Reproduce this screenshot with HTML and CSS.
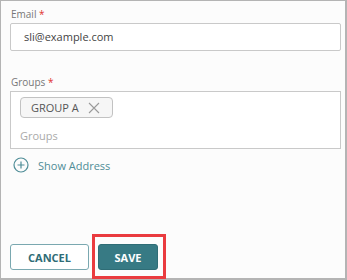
FILE: index.html
```html
<!doctype html>
<html lang="en-us">
  <head>
    <meta charset="utf-8" />
    <title>Edit User</title>
    <link rel="stylesheet" href="styles.css">
  </head>
  <body>
    <div class="panel">
      <div class="field">
        <label class="label">Email <span class="req">*</span></label>
        <div class="input">sli@example.com</div>
      </div>

      <div class="field">
        <label class="label">Groups <span class="req">*</span></label>
        <div class="tags">
          <span class="chip">
            GROUP A
            <svg class="chip-x" width="12" height="12" viewBox="0 0 12 12">
              <path d="M1 1 L11 11 M11 1 L1 11" stroke="#9a9a9a" stroke-width="1.1" fill="none" />
            </svg>
          </span>
          <div class="placeholder">Groups</div>
        </div>
      </div>

      <a class="add-link">
        <svg width="16" height="16" viewBox="0 0 16 16">
          <circle cx="8" cy="8" r="7" stroke="#4f8d97" stroke-width="1.2" fill="none" />
          <path d="M8 4.5 V11.5 M4.5 8 H11.5" stroke="#4f8d97" stroke-width="1.2" />
        </svg>
        Show Address
      </a>

      <div class="actions">
        <button class="btn btn-outline">Cancel</button>
        <span class="highlight-wrap">
          <button class="btn btn-primary">Save</button>
          <span class="highlight"></span>
        </span>
      </div>
    </div>
  </body>
</html>
```

FILE: styles.css
```css
* {
  box-sizing: border-box;
}

body {
  margin: 0;
  background: #fff;
  font-family: 'Open Sans', 'Noto Sans', sans-serif;
}

.panel {
  width: 347px;
  height: 280px;
  background: #fcfcfc;
  border-top: 1px solid #b4b4b4;
  border-left: 1px solid #b4b4b4;
  border-right: 2px solid #b4b4b4;
  border-bottom: 2px solid #b4b4b4;
  padding: 6px 4px 0 9px;
  display: flex;
  flex-direction: column;
}

.field {
  display: flex;
  flex-direction: column;
}

.label {
  font-size: 10px;
  line-height: 14px;
  color: #777;
  margin: 0 0 2px 1px;
}

.req {
  color: #e0312f;
}

.input {
  height: 28px;
  background: #fff;
  border: 1px solid #c9c9c9;
  border-radius: 2px;
  padding: 0 13px;
  font-size: 11px;
  line-height: 26px;
  color: #444;
  margin-bottom: 24px;
}

.tags {
  height: 58px;
  background: #fff;
  border: 1px solid #c9c9c9;
  padding: 5px 9px 0;
  display: flex;
  flex-direction: column;
  align-items: flex-start;
}

.chip {
  display: flex;
  align-items: center;
  gap: 9px;
  height: 21px;
  padding: 0 12px 0 10px;
  border: 1px solid #c2c2c2;
  border-radius: 4px;
  background: #f6f6f6;
  font-size: 11px;
  color: #555;
}

.chip-x {
  display: block;
}

.placeholder {
  margin-top: 10px;
  font-size: 11px;
  line-height: 16px;
  color: #aaa;
}

.add-link {
  display: flex;
  align-items: center;
  gap: 9px;
  margin: 8px 0 0 3px;
  font-size: 11px;
  color: #4f8d97;
}

.actions {
  margin-top: auto;
  margin-bottom: 8px;
  display: flex;
  gap: 9px;
}

.btn {
  height: 26px;
  border-radius: 3px;
  font-family: inherit;
  font-size: 11px;
  font-weight: 700;
  text-transform: uppercase;
  cursor: pointer;
}

.btn-outline {
  width: 79px;
  background: #fff;
  border: 1px solid #7aa8b0;
  color: #2f6c76;
}

.btn-primary {
  width: 60px;
  background: #377a84;
  border: 1px solid #2f6d76;
  color: #fff;
}

.highlight-wrap {
  position: relative;
}

.highlight {
  position: absolute;
  left: -6px;
  top: -10px;
  right: -8px;
  bottom: -9px;
  border: 3px solid #ea3b3f;
}
```
